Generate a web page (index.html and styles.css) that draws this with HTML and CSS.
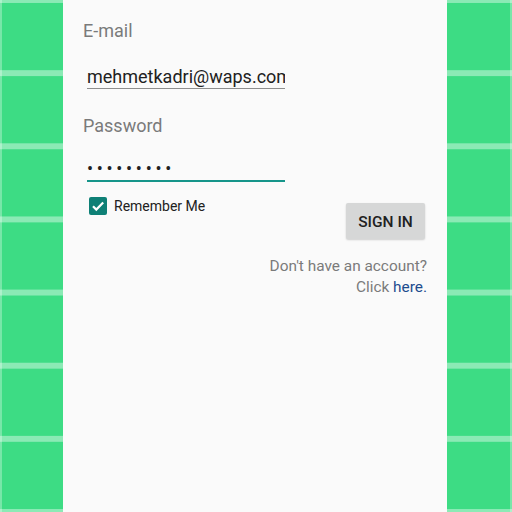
FILE: index.html
```html
<!DOCTYPE html>
<html lang="en">
<head>
<meta charset="utf-8">
<title>Sign in</title>
<link rel="stylesheet" href="styles.css">
</head>
<body>
<main class="panel">
  <div class="label">E-mail</div>
  <div class="field field-email">mehmetkadri@waps.com</div>
  <div class="label label-password">Password</div>
  <div class="field field-password">•••••••••</div>
  <div class="row">
    <label class="remember">
      <span class="checkbox">
        <svg viewBox="0 0 18 18" width="18" height="18"><path d="M4 9.3l3.3 3.3L14.2 5.6" fill="none" stroke="#fff" stroke-width="2.2"/></svg>
      </span>
      <span class="remember-text">Remember Me</span>
    </label>
    <button class="signin">SIGN IN</button>
  </div>
  <p class="signup">Don't have an account?<br>Click <a class="here">here.</a></p>
</main>
</body>
</html>
```
FILE: styles.css
```css
html, body {
  margin: 0;
  height: 100%;
}
body {
  display: flex;
  background-color: #3ddc84;
  background-image:
    linear-gradient(to bottom, rgba(255,255,255,0.4) 0 3px, transparent 3px calc(100% - 3px), rgba(255,255,255,0.4) calc(100% - 3px)),
    linear-gradient(to right, rgba(255,255,255,0.3) 0 2px, transparent 2px calc(100% - 2px), rgba(255,255,255,0.3) calc(100% - 2px));
  background-size: calc(512px / 7) calc(512px / 7);
  font-family: Roboto, "Noto Sans", sans-serif;
}
.panel {
  margin-left: 63px;
  width: 384px;
  box-sizing: border-box;
  background: #fafafa;
  padding: 20px 20px 0 20px;
  display: flex;
  flex-direction: column;
}
.label {
  font-size: 18px;
  line-height: 21px;
  color: #7a7a7a;
}
.label-password {
  margin-top: 26px;
}
.field {
  margin-left: 4px;
  width: 198px;
  font-size: 18px;
  line-height: 21px;
  color: #212121;
  white-space: nowrap;
  overflow: hidden;
}
.field-email {
  margin-top: 25px;
  padding-bottom: 1px;
  border-bottom: 1px solid #8e8e8e;
}
.field-password {
  margin-top: 22px;
  padding-bottom: 1px;
  border-bottom: 2px solid #16958a;
  font-size: 18px;
  letter-spacing: 3.7px;
}
.row {
  margin-top: 15px;
  display: flex;
  justify-content: space-between;
  align-items: flex-start;
}
.remember {
  display: flex;
  align-items: center;
  margin-left: 6px;
  gap: 7px;
}
.checkbox {
  width: 18px;
  height: 18px;
  border-radius: 2px;
  background: #0e8076;
  display: flex;
}
.remember-text {
  font-size: 14px;
  color: #212121;
}
.signin {
  margin-top: 6px;
  margin-right: 2px;
  width: 79px;
  height: 36px;
  border: none;
  border-radius: 2px;
  background: #d6d7d7;
  box-shadow: 0 1px 2px rgba(0,0,0,0.18);
  font-family: Roboto, sans-serif;
  font-weight: 500;
  font-size: 15.5px;
  color: #212121;
  padding: 1px 0 0;
}
.signup {
  margin: 17px 0 0;
  text-align: right;
  font-size: 15.4px;
  line-height: 21px;
  color: #7a7a7a;
}
.here {
  color: #1d4c8e;
}
```
